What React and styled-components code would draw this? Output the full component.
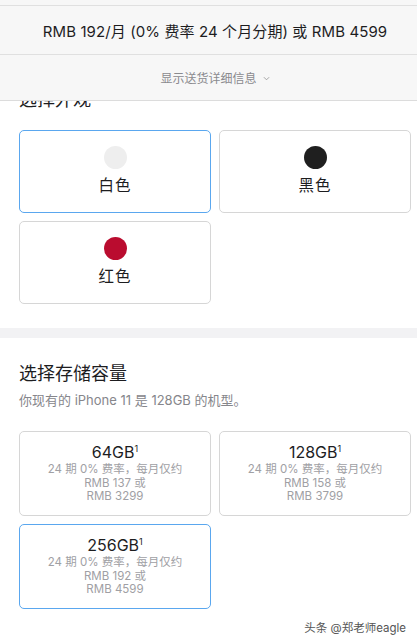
import React from 'react';
import styled, { createGlobalStyle } from 'styled-components';

const GlobalStyle = createGlobalStyle`
  html, body {
    margin: 0;
    padding: 0;
    background: #fff;
  }
  body {
    font-family: Inter, "Noto Sans CJK SC", sans-serif;
    color: #1d1d1f;
    -webkit-font-smoothing: antialiased;
  }
`;

const colors = [
  { name: '白色', swatch: '#eeeeee', selected: true },
  { name: '黑色', swatch: '#1f1f1f' },
  { name: '红色', swatch: '#ba0c2f' },
];

const storage = [
  { size: '64GB', monthly: '137', total: '3299' },
  { size: '128GB', monthly: '158', total: '3799' },
  { size: '256GB', monthly: '192', total: '4599', selected: true },
];

export default function App() {
  return (
    <Page>
      <GlobalStyle />
      <StickyBar>
        <PriceRow>RMB 192/月 (0% 费率 24 个月分期) 或 RMB 4599</PriceRow>
        <DeliveryRow>
          显示送货详细信息
          <Chevron viewBox="0 0 8 5">
            <path d="M1 1l3 3 3-3" fill="none" stroke="#999" strokeWidth="1" />
          </Chevron>
        </DeliveryRow>
      </StickyBar>

      <Section $top={88}>
        <Heading>选择外观</Heading>
        <Grid>
          {colors.map(c => (
            <ColorCard key={c.name} $selected={c.selected}>
              <Swatch $color={c.swatch} />
              <ColorName>{c.name}</ColorName>
            </ColorCard>
          ))}
        </Grid>
      </Section>

      <Band />

      <Section $top={24}>
        <Heading>选择存储容量</Heading>
        <Note>你现有的 iPhone 11 是 128GB 的机型。</Note>
        <Grid>
          {storage.map(s => (
            <StorageCard key={s.size} $selected={s.selected}>
              <Size>{s.size}<sup>1</sup></Size>
              <Terms>
                24 期 0% 费率，每月仅约<br />
                RMB {s.monthly} 或<br />
                RMB {s.total}
              </Terms>
            </StorageCard>
          ))}
        </Grid>
        <Credit>头条 @郑老师eagle</Credit>
      </Section>

      <Band $tall />
    </Page>
  );
}

// Page
const Page = styled.div`
  position: relative;
  width: 417px;
  height: 641px;
  overflow: hidden;
  background: #fff;
`;

// Sticky price bar laid over the top of the page
const StickyBar = styled.div`
  position: absolute;
  top: 0;
  left: 0;
  right: 0;
  z-index: 2;
  padding-top: 5px;
  background: #f7f7f7;
  border-bottom: 1px solid #dcdcdc;
`;

const PriceRow = styled.div`
  height: 48px;
  padding-left: 13px;
  border-top: 1px solid #e0e0e0;
  border-bottom: 1px solid #e0e0e0;
  display: flex;
  align-items: center;
  justify-content: center;
  font-size: 15px;
  letter-spacing: 0.1px;
  color: #1d1d1f;
`;

const DeliveryRow = styled.div`
  height: 45px;
  padding-left: 13px;
  display: flex;
  align-items: center;
  justify-content: center;
  gap: 6px;
  font-size: 12px;
  color: #8a8a8e;
`;

const Chevron = styled.svg`
  width: 7px;
  height: 5px;
  margin-top: 1px;
`;

const Section = styled.section`
  padding: ${p => p.$top}px 7px 24px 19px;
`;

const Heading = styled.h2`
  margin: 0;
  font-size: 18px;
  line-height: 24px;
  font-weight: 400;
  color: #1d1d1f;
`;

const Note = styled.p`
  margin: 5px 0 0;
  font-size: 13px;
  line-height: 18px;
  color: #86868b;
`;

const Grid = styled.div`
  display: grid;
  grid-template-columns: 192px 192px;
  column-gap: 8px;
  row-gap: 8px;
  margin-top: 18px;
  ${Note} + & {
    margin-top: 22px;
  }
`;

const Card = styled.div`
  box-sizing: border-box;
  border-radius: 5px;
  border: 1px solid ${p => (p.$selected ? '#5aa7ef' : '#d6d6d6')};
  background: #fff;
  display: flex;
  flex-direction: column;
  align-items: center;
`;

const ColorCard = styled(Card)`
  height: 83px;
  padding-top: 15px;
`;

const Swatch = styled.span`
  width: 23px;
  height: 23px;
  border-radius: 50%;
  background: ${p => p.$color};
`;

const ColorName = styled.span`
  margin-top: 6px;
  font-size: 15.5px;
  line-height: 22px;
  letter-spacing: 1px;
  color: #1d1d1f;
`;

const StorageCard = styled(Card)`
  height: 85px;
  padding-top: 9px;
`;

const Size = styled.div`
  font-size: 16px;
  line-height: 22px;
  color: #1d1d1f;
  sup {
    font-size: 9px;
    vertical-align: 6px;
    line-height: 0;
  }
`;

const Terms = styled.div`
  font-size: 11.5px;
  line-height: 13.5px;
  color: #a0a0a4;
  text-align: center;
`;

const Credit = styled.div`
  margin-top: 10px;
  text-align: right;
  padding-right: 4px;
  font-size: 11.5px;
  color: #555;
`;

const Band = styled.div`
  height: ${p => (p.$tall ? 20 : 10)}px;
  background: #f2f2f4;
`;
